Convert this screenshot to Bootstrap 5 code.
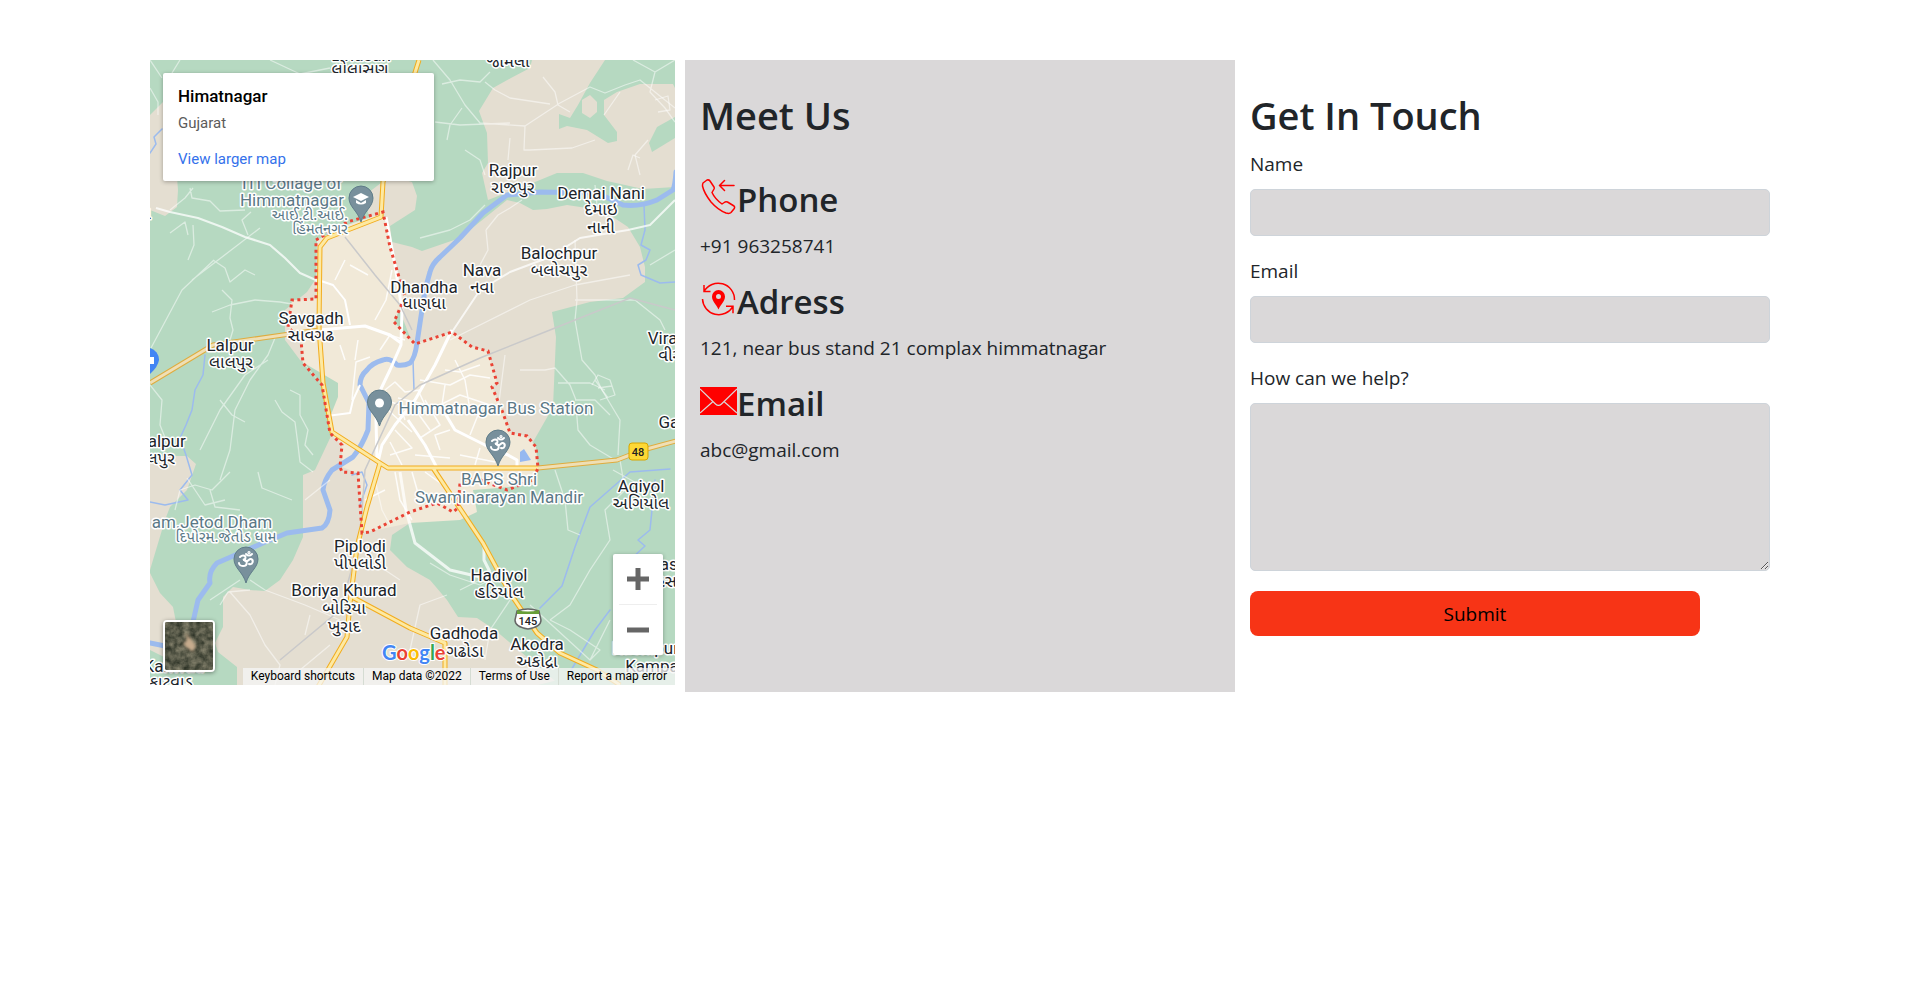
<!DOCTYPE html>
<html lang="en">
<head>
<meta charset="utf-8">
<meta name="viewport" content="width=device-width, initial-scale=1">
<title>Contact</title>
<link href="https://cdn.jsdelivr.net/npm/bootstrap@5.3.0/dist/css/bootstrap.min.css" rel="stylesheet">
<style>
  body { font-family: "Open Sans", "Noto Sans", sans-serif; font-size: 19px; line-height: 30px; color: #212529; }
  .contact-wrap { max-width: 1650px; padding-top: 60px; }
  .panel-pad { padding: 31px 15px; }
  .meet-panel { background: #dad8d9; }
  .map-col { padding: 0 10px 7px 15px; }
  h2 { font-size: 38px; line-height: 48px; font-weight: 600; margin-bottom: 10px; }
  h3 { font-size: 33px; line-height: 42px; font-weight: 600; margin-bottom: 10px; }
  .meet-panel h2 { margin-bottom: 40px; }
  .meet-panel p { margin-bottom: 20px; }
  .meet-icon { width: 37px; height: 37px; flex: none; }
  .form-label { margin-bottom: 10px; display: block; }
  .field { margin-bottom: 20px; }
  .form-control, .form-control:focus { background: #dad8d9; border: 1px solid #ced4da; border-radius: 5px; font-size: 19px; height: 47px; }
  textarea.form-control, textarea.form-control:focus { height: 168px; }
  .send-btn { width: 450px; max-width: 100%; height: 45px; border: 0; border-radius: 8px; background: #f73416; color: #000; }
  .map-box { height: 625px; background: #b6d9c1; font-family: Roboto, sans-serif; }
  .map-art { position: absolute; inset: 0; width: 100%; height: 100%; }
  .place-card { position: absolute; left: 13px; top: 13px; width: 271px; height: 108px; padding: 11px 15px; background: #fff; border-radius: 2px; box-shadow: 0 1px 4px rgba(0,0,0,.3); font-size: 15px; line-height: 24px; color: #5b5b5b; }
  .place-card strong { font-size: 17px; font-weight: 500; color: #000; display: block; margin-bottom: 3px; }
  .place-card a { color: #3471eb; text-decoration: none; display: block; margin-top: 12px; }
  .zoom-box { position: absolute; right: 12px; top: 494px; width: 50px; background: #fff; border-radius: 2px; box-shadow: 0 1px 4px rgba(0,0,0,.3); }
  .zoom-box button { border: 0; background: none; width: 50px; height: 50px; padding: 0; display: flex; align-items: center; justify-content: center; }
  .zoom-box hr { margin: 0 6px; border-color: #bbb; }
  .sat-btn { position: absolute; left: 13px; top: 560px; width: 52px; height: 52px; padding: 0; border: 2px solid #fff; border-radius: 4px; overflow: hidden; box-shadow: 0 1px 4px rgba(0,0,0,.4); }
  .sat-btn svg { display: block; width: 100%; height: 100%; }
  .credits { position: absolute; right: 0; bottom: 0; height: 17px; font-size: 12px; line-height: 17px; color: #000; }
  .credits > * { background: rgba(245,245,245,.75); padding: 0 8px; color: #000; text-decoration: none; border: 0; border-right: 1px solid #d5dcd3; white-space: nowrap; }
  .credits > :last-child { border-right: 0; }
  .lbl text { font-size: 17px; fill: #20242a; text-anchor: middle; paint-order: stroke; stroke: #fff; stroke-width: 3px; stroke-linejoin: round; }
  .lbl .guj { font-family: "Noto Sans Gujarati", "Noto Sans", Roboto, sans-serif; font-size: 17px; }
  .lbl .guj.poi { font-size: 15px; }
  .lbl .poi { fill: #5b7886; }
</style>
<script src="https://cdn.jsdelivr.net/npm/bootstrap@5.3.0/dist/js/bootstrap.bundle.min.js"></script>
</head>
<body>
<main class="container-fluid contact-wrap px-0">
  <div class="row g-0">
    <section class="col-lg-4 map-col">
      <div class="map-box position-relative overflow-hidden">
        <svg class="map-art" viewBox="0 0 525 625" preserveAspectRatio="xMidYMid slice" role="img" aria-label="Map of Himatnagar">
          <defs>
            <g id="pin"><path d="M0 23C-3 12-12 8-12-1a12 12 0 0 1 24 0C12 8 3 12 0 23Z" fill="#78909c" stroke="#5f7c89"/></g>
            <g id="om" fill="none" stroke="#fff" stroke-width="2" stroke-linecap="round"><path d="M-6-3C-3-6 1-4-1-1L-3 0C2-1 2 6-3 6-6 6-7 4-7 3M-1 1C2 3 3-2 5-1 8 0 7 5 3 4M0-6C2-4 4-4 6-6"/><circle cx="3" cy="-7.500" r=".6"/></g>
          </defs>
          <rect width="525" height="625" fill="#b6d9c1"/>
          <g fill="#e4ded1">
            <path d="M0 55 13 42 22 52 28 130 27 147 15 156 0 150Z"/>
            <path d="M382 0 380 8 361 18 343 28 329 51 337 73 338 103 332 113 338 140 385 122 407 113 433 113 457 121 493 129 525 127V28L523 24H490L467 32 454 40V55L467 72V81L458 83 437 70 417 66 409 69V54L420 58 428 45 440 23 455 0Z"/>
            <path d="M432 40 440 35 447 42V52L440 58 432 53Z"/>
            <path d="M214 136 240 116 262 122 267 136 265 150 240 166 242 182 262 187 272 191 310 178 357 140 370 143 383 150 397 149 417 145 437 148 463 157 478 167 490 187 495 207V222L473 238 440 242 402 252 406 277 403 347 383 382 386 407 300 380 230 200Z"/>
            <path d="M167 217 157 232 135 250V280L150 300 185 320 180 240Z"/>
            <path d="M182 374 165 410 153 415V477L143 500 130 520 115 531 100 530 83 527 73 537V567L65 583 68 592 87 607V625H410L345 570 327 558 308 557 297 540 280 520 257 507 240 490 242 475 260 463 200 380Z"/>
            <path d="M0 400 10 396H37L46 404 37 430 20 447 15 460 0 510ZM0 513 10 533 23 547 26 562 60 592 20 600 0 590Z"/>
          </g>
          <path d="M525 57 507 67 499 83 502 92 525 78Z" fill="#b6d9c1"/>
          <path fill="#f1e9d8" d="M167 180 197 165 233 153 240 187 255 237 244 262 265 284 302 272 322 287 338 291 347 323 342 327 353 353 360 373 377 376 386 387 388 408 383 425 323 430 327 452 310 460 260 463 212 473 208 413 192 407 192 385 180 373 172 325 153 303 151 280 138 267 142 240 166 239Z"/>
          <path d="M154 303 188 323V337L180 357 172 325ZM388 625 440 612 470 625Z" fill="#b6d9c1"/>
          <g fill="none" stroke="#9cbbee" stroke-linejoin="round" stroke-linecap="round">
            <path stroke-width="5" d="M526 112Q525 126 523 130L507 140Q490 147 473 145L447 133 390 132 357 135 333 153 310 178 290 197Q282 204 280 212L275 230 267 283Q265 298 260 303 254 306 247 305 240 297 233 300 222 303 217 310 210 316 210 325L219 343 218 370Q212 386 203 397L182 410Q174 420 173 430L180 450Q179 464 172 468L137 473 113 483 67 503Q58 512 60 523L48 540 43 562Q35 583 20 587L0 583"/>
            <path stroke-width="1.500" d="M0 93 6 84 4 77 12 69M494 145 495 170 491 185 500 190 496 200 488 205 491 215 510 223 525 222M263 300 264 330M55 295 53 315 45 330 42 350 36 365 30 378 36 395 42 415 30 430 38 440 15 445 0 442M390 548 412 526 425 487 440 447 480 412 520 409M505 420 500 470 488 480 495 486 480 500M460 550 445 570 420 612M202 415 212 412 217 425 210 445"/>
          </g>
          <path d="M370 402V392L374 389 381 400Z" fill="#96b8f0"/>
          <!-- local streets -->
          <g fill="none" stroke="#fff" stroke-opacity=".5" stroke-width="1.300" stroke-linejoin="round">
            <path d="M6 148 20 152 48 158 72 167 95 177 120 185 135 198 150 213 168 221" stroke-width="2.200" stroke-opacity=".75"/>
            <path d="M0 0 12 18M0 28 8 42 8 55M30 0 22 13M40 128 42 138 60 141 70 151 95 150M20 150 35 138 43 128M42 220 110 168M98 175 92 160 101 152M43 165 44 185 38 200M20 173 35 162 38 175M1 288 32 230 64 200M63 200 75 208 80 222 95 210 105 215M72 230 82 240 80 258 83 270 80 280M62 252 80 245 105 240 130 242 142 244M125 278 118 295 100 320 85 350 80 390 70 420M118 300 95 315 70 350 50 390M0 325 12 340 10 365 18 385M70 340 82 355 95 362M125 340 132 352 145 362 148 385 150 402 163 412M140 330 150 335 150 355 158 370 155 385 163 395M25 450 30 430 45 425 62 430 80 412M37 418 55 445 75 440M60 430 65 447 90 450M100 530 78 532 70 545M100 520 115 530 155 545 190 560M80 532 100 555 115 585 130 605 125 625M90 520 60 540"/>
            <path d="M283 0 300 20 315 45 330 63 375 66 410 43 440 27 455 33 475 25 490 20 525 48M292 24 310 20 330 22 340 12M335 22 345 30 360 38 400 44M393 17 405 32 408 45 420 52M375 66 374 90 380 90 422 88 445 80M360 78 358 100M285 62 310 65 360 63M297 80 300 65 312 48M483 0 505 12 525 0M505 12 500 32 515 48 525 62M490 115 485 95 498 80M315 90 330 100 335 115M270 178 300 170 320 160 335 145M336 170 348 155 360 148 372 140M336 170 338 190 330 205M445 125 447 145 462 165"/>
            <path stroke-width="2" stroke-opacity=".75" d="M525 140 500 165 478 170 430 178 400 197 360 212 330 230 302 272"/>
            <path d="M525 190 500 205M425 180 427 240 425 260 432 300 445 315 452 330 470 360 468 395M425 240 445 240 485 240 510 260 515 270M300 280 380 240 425 225 480 215M355 295 348 350M370 310H395L405 308 420 325 426 340M408 323H440L455 330M425 340 445 340 460 355M426 345 428 370 440 385 465 400M405 410 415 440 418 470 430 475M470 400 475 430 455 450 460 480 440 510 420 545 400 560M463 410 490 425 480 440M360 533 330 520 310 530M360 540 340 570 335 600M400 560 420 570 450 590 440 600M380 545 440 600 460 560M297 535 270 545 260 590M230 490 235 510 250 520M225 420 232 450 240 465"/>
            <path d="M454 55 470 32M442 325 448 315 460 320 465 335 450 340M445 320 458 338M448 328 462 326M505 40 518 36 520 50 508 52M478 110 483 95 490 98" />
            <path d="M120 0 150 14 180 8M240 0 230 13M350 515 330 525 300 515 280 503M108 412 112 428 142 440M155 440 180 420M180 585 150 610M160 555 155 575" />
          </g>
          <!-- city streets -->
          <g fill="none" stroke="#fff" stroke-linejoin="round">
            <path stroke-width="3" d="M236 157 245 205 252 250 251 285 240 310 228 335 226 360 227 400M302 270 285 305 265 340 245 365 232 385 228 402M169 270 215 266 240 275 251 283M290 345 305 370 335 385 358 395 367 400V408M258 360 275 385 287 408"/>
            <path stroke-width="2" d="M168 220 183 225 195 240 200 265M177 356 200 353 203 340 210 325"/>
            <path stroke-width="1.500" stroke-opacity=".85" d="M242 210 236 240 225 260M230 290 240 275 255 280M202 340 204 320 206 302 220 297M235 330 245 322 255 332 270 330M235 340 250 345 255 360M270 320 300 325 320 315 340 318M280 350 310 335 340 345M305 300 315 320 320 350M295 310 310 312 330 305M320 375 330 350M300 370 285 375 290 390M330 388 325 405M340 375 355 385M245 370 262 388 240 395M262 345 280 370M255 355 300 345M240 382 252 405M275 340 290 365 270 378M215 440 235 430M245 412 250 440 262 460M262 412 270 440M275 412 300 430M310 395 345 402M185 220 195 200M200 205 218 215M190 285 195 300M208 280 205 300M238 350 262 372M248 338 278 345M265 395 300 398M268 330 275 345 262 355M295 325 292 345 308 350"/>
            <path stroke-width="3" stroke-opacity=".75" d="M250 412 256 450 265 483 300 510 330 517M334 485V500L340 512"/>
          </g>
          <path d="M195 177 225 215 250 245 262 270M525 250 480 238 400 270 330 298 270 325 245 345 215 410 210 480 190 550 130 600" fill="none" stroke="#c9c9ca" stroke-width="1.500"/>
          <!-- highways -->
          <g fill="none" stroke-linejoin="round">
            <path stroke="#dfac3e" stroke-width="5" d="M0 323 63 285 133 275 169 270M388 408 467 400 493 390 526 381"/>
            <path stroke="#efdfb5" stroke-width="3" d="M0 323 63 285 133 275 169 270M388 408 467 400 493 390 526 381"/>
            <path stroke="#f2ac1d" stroke-width="5" d="M269 0 250 60 233 122 231 157 177 178 170 187 169 267 173 323 182 372 230 403 238 408H388M230 403 217 447 207 487 200 543 197 577 168 627M283 408 333 483 360 533 387 573 410 593 447 610 470 625M202 537 260 568 295 583V625"/>
            <path stroke="#fde9a2" stroke-width="3" d="M269 0 250 60 233 122 231 157 177 178 170 187 169 267 173 323 182 372 230 403 238 408H388M230 403 217 447 207 487 200 543 197 577 168 627M283 408 333 483 360 533 387 573 410 593 447 610 470 625M202 537 260 568 295 583V625"/>
          </g>
          <path fill="none" stroke="#ea4335" stroke-width="3" stroke-dasharray="3 3.500" d="M166 180 197 162 233 152 240 187 255 237 244 262 265 284 302 272 322 287 338 291 347 323 342 327 353 353 360 373 377 376 386 387 388 408 383 420 357 430 323 417 310 423 308 448 303 452 287 443 260 452 220 472 212 473 208 413 192 412 190 407 192 385 180 373 172 325 153 303 151 280 138 267 142 240 166 239Z"/>
          <use href="#pin" x="211" y="139"/><path d="M203 137 211 133 219 137 211 141ZM206 140V143Q211 146 216 143V140L211 143Z" fill="#fff"/>
          <use href="#pin" x="229.500" y="343"/><circle cx="229.500" cy="343" r="4.500" fill="#fff"/>
          <use href="#pin" x="348" y="383"/><use href="#om" x="348" y="384"/>
          <use href="#pin" x="96" y="500"/><use href="#om" x="96" y="500"/>
          <path d="M0 288A12 12 0 0 1 9 300Q8 307 0 314Z" fill="#4285f4"/><rect y="297" width="4" height="7" fill="#fff"/>
          <rect x="479" y="383" width="19" height="17" rx="3" fill="#fdd835" stroke="#d8a600"/>
          <path d="M367 551Q378 547 389 551L391 560Q391 567 378 569 365 567 365 560Z" fill="#fff" stroke="#666" stroke-width="1.500"/><path d="M367 550Q378 553 389 550V554H367Z" fill="#689f38"/>
          <g class="lbl">
            <text x="211" y="1">Lolasan</text><text x="210" y="15" class="guj">લોલાસણ</text>
            <text x="358" y="7" class="guj">જામલા</text>
            <text x="363" y="116">Rajpur</text><text x="363" y="133" class="guj">રાજપુર</text>
            <text x="451" y="139">Demai Nani</text><text x="451" y="155" class="guj">દેમાઇ</text><text x="451" y="173" class="guj">નાની</text>
            <text x="409" y="199">Balochpur</text><text x="409" y="216" class="guj">બલોચપુર</text>
            <text x="332" y="216">Nava</text><text x="332" y="233" class="guj">નવા</text>
            <text x="274" y="233">Dhandha</text><text x="274" y="249" class="guj">ધાણધા</text>
            <text x="161" y="264">Savgadh</text><text x="161" y="281" class="guj">સાવગઢ</text>
            <text x="80" y="291">Lalpur</text><text x="81" y="308" class="guj">લાલપુર</text>
            <text x="12" y="387">Jalpur</text><text x="2" y="404" class="guj">જાલપુર</text>
            <text x="533" y="284">Virawada</text><text x="535" y="301" class="guj">વીરાવાડા</text>
            <text x="533" y="368">Gadha</text>
            <text x="-12" y="159" class="guj">ગામ</text>
            <text x="491" y="432">Aqiyol</text><text x="491" y="449" class="guj">અગિયોલ</text>
            <text x="210" y="492">Piplodi</text><text x="210" y="509" class="guj">પીપલોડી</text>
            <text x="194" y="536">Boriya Khurad</text><text x="194" y="554" class="guj">બોરિયા</text><text x="194" y="572" class="guj">ખુરાદ</text>
            <text x="349" y="521">Hadivol</text><text x="349" y="538" class="guj">હડિયોલ</text>
            <text x="314" y="579">Gadhoda</text><text x="315" y="597" class="guj">ગઢોડા</text>
            <text x="387" y="590">Akodra</text><text x="387" y="607" class="guj">અકોદ્રા</text>
            <text x="24" y="612">Kanwad</text><text x="21" y="628" class="guj">કાટવાડ</text>
            <text x="522" y="510">Hasan</text><text x="520" y="527" class="guj">હસન</text>
            <text x="500" y="594">Rachipura</text><text x="502" y="612">Kampa</text>
            <text x="142" y="129" class="poi">ITI Collage of</text><text x="142" y="146" class="poi">Himmatnagar</text><text x="160" y="160" class="guj poi">આઈ.ટી.આઈ.</text><text x="170" y="174" class="guj poi">હિંમતનગર</text>
            <text x="346" y="354" class="poi">Himmatnagar Bus Station</text>
            <text x="349" y="425" class="poi">BAPS Shri</text><text x="349" y="443" class="poi">Swaminarayan Mandir</text>
            <text x="62" y="468" class="poi">am.Jetod Dham</text><text x="76" y="482" class="guj poi">દિપોરમ.જેતોડ ધામ</text>
          </g>
          <g font-weight="500" text-anchor="middle" fill="#222"><text x="488" y="396" font-size="11">48</text><text x="378" y="565" font-size="11">145</text></g>
          <text x="232" y="600" font-size="20" font-family="Lato, sans-serif" font-weight="700" paint-order="stroke" stroke="#fff" stroke-width="2"><tspan fill="#4285f4">G</tspan><tspan fill="#ea4335">o</tspan><tspan fill="#fbbc05">o</tspan><tspan fill="#4285f4">g</tspan><tspan fill="#34a853">l</tspan><tspan fill="#ea4335">e</tspan></text>
        </svg>
        <div class="place-card"><strong>Himatnagar</strong>Gujarat<a href="#">View larger map</a></div>
        <div class="zoom-box">
          <button type="button" aria-label="Zoom in"><svg width="22" height="22"><path d="M11 0V22M0 11H22" stroke="#666" stroke-width="5"/></svg></button>
          <hr>
          <button type="button" aria-label="Zoom out"><svg width="22" height="22"><path d="M0 11H22" stroke="#666" stroke-width="5"/></svg></button>
        </div>
        <button type="button" class="sat-btn" aria-label="Show satellite imagery">
          <svg viewBox="0 0 48 48"><defs><filter id="grain" color-interpolation-filters="sRGB"><feTurbulence type="fractalNoise" baseFrequency=".16" numOctaves="3" seed="4"/><feColorMatrix values=".5 0 0 0 .1 .45 0 0 0 .13 .4 0 0 0 .09 0 0 0 0 1"/></filter><filter id="haze"><feGaussianBlur stdDeviation="1.500"/></filter></defs><rect width="48" height="48" fill="#5b5b4b"/><rect width="48" height="48" filter="url(#grain)"/><path d="M20 10 26 17 31 24 28 30 22 26 18 22 22 18Z" fill="#c7ac8d" filter="url(#haze)"/></svg>
        </button>
        <div class="credits d-flex">
          <button type="button">Keyboard shortcuts</button><span>Map data ©2022</span><a href="#">Terms of Use</a><a href="#">Report a map error</a>
        </div>
      </div>
    </section>

    <section class="col-lg-4 meet-panel panel-pad">
      <h2>Meet Us</h2>
      <h3 class="d-flex align-items-start"><svg class="meet-icon" viewBox="0 0 37 37" fill="none" stroke="#f00" stroke-width="1.500" stroke-linejoin="round" stroke-linecap="round"><path d="M3 4 7 1Q9 .5 10 2L14 8Q14.500 9 14 10L12 13.500Q15 20 22 25L25 23Q26 22.500 27.500 23L34 27Q35 28 34.300 29.500L31 33.500Q29.500 35 26 34 18 31 11 23 4 14 2.500 7 2.500 5 3 4ZM34 6.500H19.500M24.500 1.500 19.500 6.500 24.500 11.500"/></svg>Phone</h3>
      <p>+91 963258741</p>
      <h3 class="d-flex align-items-start"><svg class="meet-icon" viewBox="0 1 37 37" fill="none" stroke="#f00" stroke-width="1.500"><path d="M4 11.500A16.300 16.300 0 0 1 34.500 20M4 5V11.500H10.500M2.500 19A16.300 16.300 0 0 0 33 26.300M26 26.300H33V33.300"/><path d="M18.500 29.500C16 24 12 21 12 16.500a6.500 6.500 0 0 1 13 0C25 21 21 24 18.500 29.500ZM18.500 14a2.500 2.500 0 1 0 0 5 2.500 2.500 0 0 0 0-5Z" fill="#f00" fill-rule="evenodd" stroke="none"/></svg>Adress</h3>
      <p>121, near bus stand 21 complax himmatnagar</p>
      <h3 class="d-flex align-items-start"><svg class="meet-icon" viewBox="0 1 37 37"><path d="M0 5H37V33H0Z" fill="#f00"/><path d="M0 7 15.500 22Q18.500 25 21.500 22L37 7M0 31 12.500 20M37 31 24.500 20" fill="none" stroke="#dad8d9" stroke-width="1.200"/></svg>Email</h3>
      <p>abc@gmail.com</p>
    </section>

    <section class="col-lg-4 panel-pad">
      <h2>Get In Touch</h2>
      <form>
        <div class="field"><label class="form-label" for="name">Name</label><input class="form-control" type="text" id="name"></div>
        <div class="field"><label class="form-label" for="email">Email</label><input class="form-control" type="email" id="email"></div>
        <div class="field"><label class="form-label" for="help">How can we help?</label><textarea class="form-control" id="help"></textarea></div>
        <button type="submit" class="send-btn">Submit</button>
      </form>
    </section>
  </div>
</main>
</body>
</html>
